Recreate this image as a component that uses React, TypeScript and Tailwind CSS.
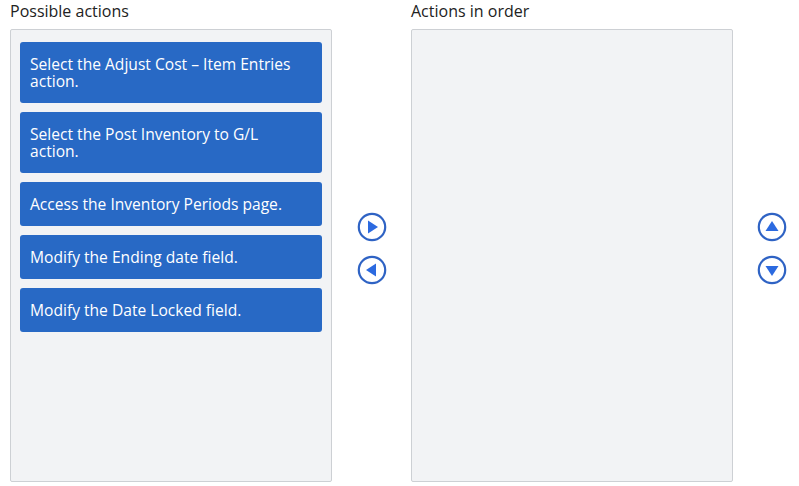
import React from "react";

const items = [
  "Select the Adjust Cost – Item Entries action.",
  "Select the Post Inventory to G/L action.",
  "Access the Inventory Periods page.",
  "Modify the Ending date field.",
  "Modify the Date Locked field.",
];

function CircleBtn({ dir }: { dir: "right" | "left" | "up" | "down" }) {
  const tri: Record<string, string> = {
    right: "11,8.5 21,15 11,21.5",
    left: "19,8.5 9,15 19,21.5",
    up: "8.5,19 15,9 21.5,19",
    down: "8.5,11 15,21 21.5,11",
  };
  return (
    <button className="w-[30px] h-[30px] flex items-center justify-center shrink-0">
      <svg width="30" height="30" viewBox="0 0 30 30">
        <circle cx="15" cy="15" r="13.2" fill="white" stroke="#2f63c4" strokeWidth="2.2" />
        <polygon points={tri[dir]} fill="#2c6ae0" />
      </svg>
    </button>
  );
}

export default function App() {
  return (
    <div
      className="w-[799px] h-[486px] bg-white flex pl-[10px] text-[#222] overflow-hidden"
      style={{ fontFamily: "'Open Sans', 'Noto Sans', sans-serif" }}
    >
      <div className="w-[322px] shrink-0 flex flex-col">
        <div className="h-[29px] pt-[1px] text-[16px] leading-[20px]">Possible actions</div>
        <div className="h-[453px] bg-[#f2f3f5] border border-[#cdd0d4] rounded-[2px] pt-[12px] px-[9px] flex flex-col gap-[9px]">
          {items.map((t) => (
            <div
              key={t}
              className="bg-[#2869c5] text-white rounded-[3px] text-[15.6px] leading-[17px] pl-[10px] pr-[14px] pt-[14px] pb-[13px]"
            >
              {t}
            </div>
          ))}
        </div>
      </div>
      <div className="w-[79px] shrink-0 flex flex-col items-center pt-[212px] gap-[13px]">
        <CircleBtn dir="right" />
        <CircleBtn dir="left" />
      </div>
      <div className="w-[322px] shrink-0 flex flex-col">
        <div className="h-[29px] pt-[1px] text-[16px] leading-[20px]">Actions in order</div>
        <div className="h-[453px] bg-[#f2f3f5] border border-[#cdd0d4] rounded-[2px]" />
      </div>
      <div className="w-[66px] shrink-0 flex flex-col items-start pl-[24px] pt-[212px] gap-[13px]">
        <CircleBtn dir="up" />
        <CircleBtn dir="down" />
      </div>
    </div>
  );
}
